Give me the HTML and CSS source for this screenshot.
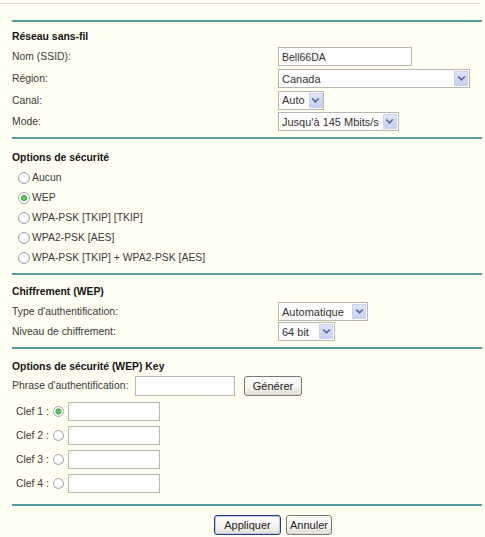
FILE: index.html
```html
<!DOCTYPE html>
<html lang="fr">
<head>
<meta charset="utf-8">
<title>Paramètres sans fil</title>
<link rel="stylesheet" href="styles.css">
</head>
<body>
<div class="topline"></div>
<form class="page">
  <section class="sec s1">
    <div class="title">Réseau sans-fil</div>
    <div class="row r1"><span class="lbl">Nom (SSID):</span><input type="text" class="txt w-ssid" value="Bell66DA"></div>
    <div class="row r1"><span class="lbl">Région:</span>
      <div class="sel w-region"><span class="val">Canada</span><span class="arr"><svg width="9" height="7" viewBox="0 0 9 7"><path d="M1.2 1.5 L4.5 4.8 L7.8 1.5" stroke="#5468a0" stroke-width="1.7" fill="none"/></svg></span></div></div>
    <div class="row r1"><span class="lbl">Canal:</span>
      <div class="sel w-canal"><span class="val">Auto</span><span class="arr"><svg width="9" height="7" viewBox="0 0 9 7"><path d="M1.2 1.5 L4.5 4.8 L7.8 1.5" stroke="#5468a0" stroke-width="1.7" fill="none"/></svg></span></div></div>
    <div class="row r1"><span class="lbl">Mode:</span>
      <div class="sel w-mode"><span class="val">Jusqu'à 145 Mbits/s</span><span class="arr"><svg width="9" height="7" viewBox="0 0 9 7"><path d="M1.2 1.5 L4.5 4.8 L7.8 1.5" stroke="#5468a0" stroke-width="1.7" fill="none"/></svg></span></div></div>
  </section>

  <section class="sec s2">
    <div class="title">Options de sécurité</div>
    <label class="opt"><input type="radio" name="sec" class="rb">Aucun</label>
    <label class="opt"><input type="radio" name="sec" class="rb" checked>WEP</label>
    <label class="opt"><input type="radio" name="sec" class="rb">WPA-PSK [TKIP] [TKIP]</label>
    <label class="opt"><input type="radio" name="sec" class="rb">WPA2-PSK [AES]</label>
    <label class="opt"><input type="radio" name="sec" class="rb">WPA-PSK [TKIP] + WPA2-PSK [AES]</label>
  </section>

  <section class="sec s3">
    <div class="title">Chiffrement (WEP)</div>
    <div class="row r3"><span class="lbl">Type d'authentification:</span>
      <div class="sel w-auth"><span class="val">Automatique</span><span class="arr"><svg width="9" height="7" viewBox="0 0 9 7"><path d="M1.2 1.5 L4.5 4.8 L7.8 1.5" stroke="#5468a0" stroke-width="1.7" fill="none"/></svg></span></div></div>
    <div class="row r3"><span class="lbl">Niveau de chiffrement:</span>
      <div class="sel w-bits"><span class="val">64 bit</span><span class="arr"><svg width="9" height="7" viewBox="0 0 9 7"><path d="M1.2 1.5 L4.5 4.8 L7.8 1.5" stroke="#5468a0" stroke-width="1.7" fill="none"/></svg></span></div></div>
  </section>

  <section class="sec s4">
    <div class="title">Options de sécurité (WEP) Key</div>
    <div class="phrase"><span class="plbl">Phrase d'authentification:</span><input type="text" class="txt w-phrase"><button type="button" class="btn w-gen">Générer</button></div>
    <div class="key"><span class="klbl">Clef 1 :</span><input type="radio" name="key" class="rb" checked><input type="text" class="txt w-key"></div>
    <div class="key"><span class="klbl">Clef 2 :</span><input type="radio" name="key" class="rb"><input type="text" class="txt w-key"></div>
    <div class="key"><span class="klbl">Clef 3 :</span><input type="radio" name="key" class="rb"><input type="text" class="txt w-key"></div>
    <div class="key"><span class="klbl">Clef 4 :</span><input type="radio" name="key" class="rb"><input type="text" class="txt w-key"></div>
  </section>

  <section class="sec s5">
    <div class="actions">
      <button type="button" class="btn def w-app">Appliquer</button>
      <button type="button" class="btn w-ann">Annuler</button>
    </div>
  </section>
</form>
</body>
</html>
```

FILE: styles.css
```css
html, body {
  margin: 0;
  padding: 0;
}
body {
  background: #fffff2;
  font-family: "Liberation Sans", Arial, sans-serif;
  font-size: 10.4px;
  color: #3a3a3a;
  width: 485px;
  height: 537px;
  overflow: hidden;
}
.topline {
  margin-top: 3px;
  width: 480px;
  height: 1px;
  background: #d9d9d2;
}
.page {
  margin: 16px 0 0 12px;
  width: 470px;
}
.sec {
  border-top: 2px solid #5a9aa2;
}
.title {
  font-weight: bold;
  color: #151515;
  line-height: 14px;
  height: 14px;
}
.s1 { padding: 8px 0 4px; }
.s1 .title { margin-bottom: 2px; }
.s2 { padding: 12px 0 5px; }
.s2 .title { margin-bottom: 3px; }
.s3 { padding: 10px 0 5px; }
.s3 .title { margin-bottom: 3px; }
.s4 { padding: 11px 0 8px; }
.s4 .title { margin-bottom: 2px; }
.s5 { padding-top: 9px; }

.row {
  display: flex;
  align-items: center;
}
.r1 { height: 21.7px; }
.r3 { height: 20px; }
.lbl {
  width: 266px;
  flex: none;
}

.txt {
  box-sizing: border-box;
  height: 19px;
  margin: 0;
  border: 1px solid #b8b8ae;
  background: #fff;
  font-family: "Liberation Sans", Arial, sans-serif;
  font-size: 10.5px;
  color: #333;
  padding: 0 3px;
  outline: none;
}
.w-ssid { width: 134px; }
.w-phrase { width: 100px; height: 20px; margin-left: 5px; }
.w-key { width: 92px; height: 19px; margin-left: 4px; }

.sel {
  box-sizing: border-box;
  height: 19px;
  display: flex;
  align-items: center;
  border: 1px solid #b8b8ae;
  background: #fff;
  padding-left: 3px;
  font-size: 11px;
  color: #333;
}
.sel .val {
  white-space: nowrap;
}
.sel .arr {
  margin-left: auto;
  margin-right: 1px;
  width: 14px;
  height: 15px;
  box-sizing: border-box;
  border: 1px solid #c9d2ee;
  background: linear-gradient(#dfe5f8, #c6d0f0);
  display: flex;
  align-items: center;
  justify-content: center;
  flex: none;
}
.w-region { width: 192px; }
.w-canal { width: 46px; }
.w-canal .arr { margin-left: 4px; }
.w-mode { width: 121px; }
.w-mode .arr { margin-left: 4px; }
.w-auth { width: 90px; }
.w-bits { width: 57px; }

.opt {
  display: flex;
  align-items: center;
  height: 20px;
  padding-left: 6px;
}
.rb {
  -webkit-appearance: none;
  appearance: none;
  box-sizing: border-box;
  width: 12px;
  height: 12px;
  margin: 0 2px 0 0;
  border: 1px solid #9aa8b6;
  border-radius: 50%;
  background: radial-gradient(circle at 40% 40%, #ffffff 0 35%, #e6e6de 100%);
  flex: none;
}
.rb:checked {
  background: radial-gradient(circle, #66c466 0 1.6px, #3a9e3a 2.6px, #ffffff 3.4px, #ffffff 55%, #e6e6de 100%);
}

.phrase {
  display: flex;
  align-items: center;
  height: 20px;
}
.plbl { width: 118px; flex: none; }
.btn {
  box-sizing: border-box;
  height: 20px;
  margin: 0;
  padding: 0;
  border: 1px solid #7a7a70;
  border-radius: 3px;
  background: linear-gradient(#ffffff, #f4f3ee 60%, #dedcd2);
  font-family: "Liberation Sans", Arial, sans-serif;
  font-size: 11px;
  color: #222;
}
.w-gen { width: 58px; margin-left: 9px; }

.key {
  display: flex;
  align-items: center;
  height: 24px;
  padding-left: 4px;
}
.phrase + .key { margin-top: 4px; }
.klbl { width: 37px; flex: none; }
.key .rb { width: 11px; height: 11px; margin-right: 0; }

.actions {
  display: flex;
  gap: 5px;
  padding-left: 202px;
}
.btn.def {
  border-color: #2d3f78;
  box-shadow: inset 0 0 0 1px #b8c8ef;
}
.w-app { width: 67px; }
.w-ann { width: 46px; }
```
